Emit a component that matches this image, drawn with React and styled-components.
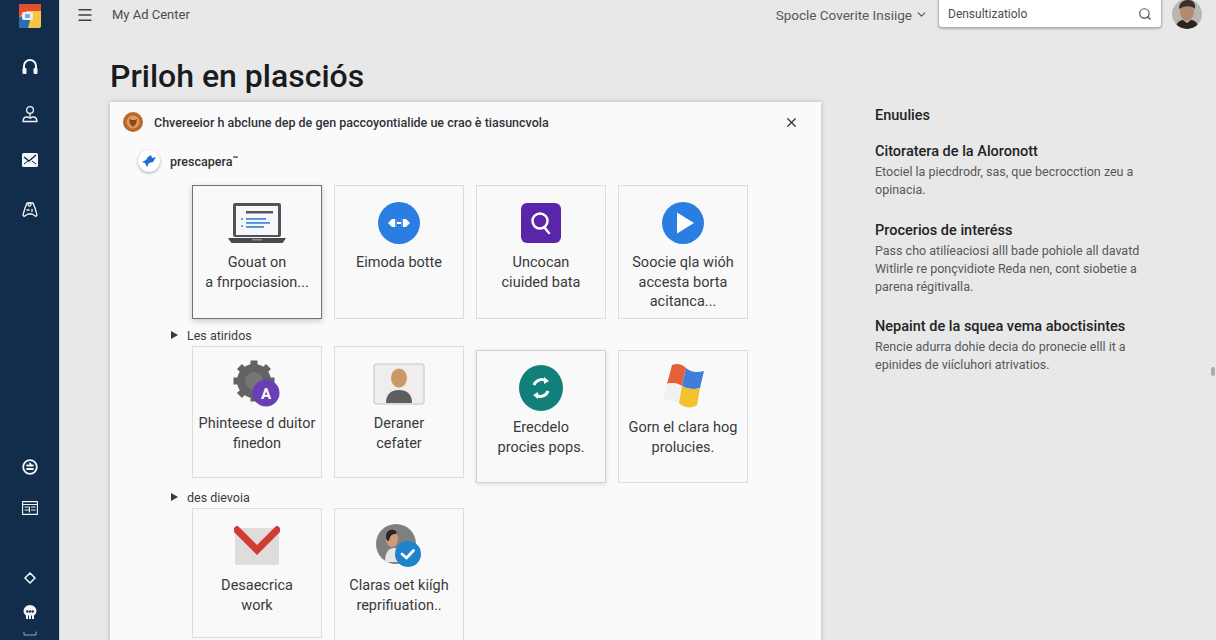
import styled, { createGlobalStyle } from "styled-components";
import { Menu, Search, ChevronDown, X } from "lucide-react";

const GlobalStyle = createGlobalStyle`
  html, body {
    margin: 0;
    height: 100%;
    overflow: hidden;
    background: #e8e8e8;
    font-family: Roboto, "Liberation Sans", sans-serif;
    color: #202124;
  }
`;

const Shell = styled.div`
  display: flex;
  width: 1216px;
  height: 640px;
  overflow: hidden;
`;

const Sidebar = styled.nav`
  flex: 0 0 60px;
  background: #122c4c;
  border-right: 1px solid #c9d2dc;
  box-sizing: border-box;
  display: flex;
  flex-direction: column;
  align-items: center;
  padding-top: 4px;
  color: #f4f6f8;
`;

const NavIcon = styled.div`
  margin-top: ${({ $gap }) => $gap || 0}px;
  width: 24px;
  height: 24px;
  flex: none;
  display: flex;
  align-items: center;
  justify-content: center;
`;

const Main = styled.main`
  flex: 1;
  min-width: 0;
  display: flex;
  flex-direction: column;
  position: relative;
`;

const TopBar = styled.header`
  height: 29px;
  display: flex;
  align-items: center;
  padding: 0 14px 2px 16px;
  color: #3c4043;
`;

const MenuButton = styled.button`
  border: 0;
  background: none;
  padding: 0;
  width: 18px;
  height: 18px;
  color: #3c4043;
  display: flex;
`;

const Product = styled.span`
  margin-left: 18px;
  font-size: 13px;
  color: #4a4d50;
`;

const Scope = styled.span`
  margin-left: auto;
  display: flex;
  align-items: center;
  gap: 3px;
  font-size: 13.5px;
  color: #55585c;
`;

const SearchBox = styled.div`
  margin: -4px 0 0 10px;
  width: 224px;
  height: 31px;
  box-sizing: border-box;
  background: #fff;
  border: 1px solid #b4b6b8;
  border-top: 0;
  border-radius: 0 0 4px 4px;
  box-shadow: 0 1px 2px rgba(0, 0, 0, 0.25);
  display: flex;
  align-items: center;
  justify-content: space-between;
  padding: 3px 9px 0;
  font-size: 12px;
  color: #4a4d50;
`;

const Avatar = styled.svg`
  margin-left: 10px;
  width: 30px;
  height: 30px;
  flex: none;
  margin-top: -2px;
`;

const Title = styled.h1`
  margin: 26px 0 0 50px;
  font-size: 32px;
  line-height: 38px;
  font-weight: 500;
  color: #1a1b1d;
`;

const Content = styled.div`
  flex: 1;
  min-height: 0;
  display: flex;
  margin: 7px 0 0 50px;
  gap: 54px;
`;

const Card = styled.section`
  flex: 0 0 711px;
  height: 560px;
  box-sizing: border-box;
  background: #fafafa;
  box-shadow: 0 0 5px rgba(0, 0, 0, 0.22);
  padding: 10px 13px 0;
`;

const CardHeader = styled.div`
  display: flex;
  align-items: center;
  height: 20px;
  font-size: 12.5px;
  font-weight: 500;
  color: #303236;
`;

const HeaderLabel = styled.span`
  margin-left: 11px;
  flex: 1;
`;

const CloseButton = styled.button`
  border: 0;
  background: none;
  padding: 0;
  margin-right: 9px;
  display: flex;
  color: #303236;
`;

const PickRow = styled.div`
  display: flex;
  align-items: center;
  gap: 10px;
  margin: 18px 0 0 15px;
  height: 22px;
  font-size: 12.5px;
  font-weight: 500;
  color: #303236;
`;

const PickBadge = styled.span`
  width: 22px;
  height: 22px;
  border-radius: 50%;
  background: #fff;
  box-shadow: 0 1px 3px rgba(0, 0, 0, 0.35);
  display: flex;
  align-items: center;
  justify-content: center;
`;

const TileRow = styled.div`
  display: flex;
  align-items: flex-start;
  gap: 12px;
  margin: ${({ $top }) => $top || 0}px 0 0 69px;
`;

const Tile = styled.div`
  flex: 0 0 130px;
  height: ${({ $h }) => $h || 134}px;
  margin-top: ${({ $drop }) => $drop || 0}px;
  box-sizing: border-box;
  background: #f9f9f9;
  border: ${({ $selected, $raised }) =>
    $selected ? "1.5px solid #707274" : $raised ? "1.5px solid #d0d1d2" : "1.5px solid #dcdddd"};
  box-shadow: ${({ $selected, $raised }) =>
    $selected
      ? "0 2px 6px rgba(0,0,0,0.2)"
      : $raised
      ? "0 1px 4px rgba(0,0,0,0.14)"
      : "none"};
  display: flex;
  flex-direction: column;
  align-items: center;
  padding-top: 15px;
`;

const IconSlot = styled.div`
  height: 44px;
  display: flex;
  align-items: center;
  justify-content: center;
  margin-bottom: 8px;
`;

const TileText = styled.div`
  font-size: 14.5px;
  line-height: 19.5px;
  text-align: center;
  color: #38393b;
  white-space: pre-line;
`;

const SectionLabel = styled.div`
  display: flex;
  align-items: center;
  height: 16px;
  margin: ${({ $top }) => $top}px 0 3px 48px;
  font-size: 12.5px;
  color: #3a3b3d;
`;

const Caret = styled.span`
  width: 0;
  height: 0;
  margin-right: 9px;
  border-left: 7px solid #3a3b3d;
  border-top: 4px solid transparent;
  border-bottom: 4px solid transparent;
`;

const Aside = styled.aside`
  flex: 1;
  min-width: 0;
  padding-top: 5px;
`;

const AsideTitle = styled.h2`
  margin: 0;
  font-size: 14.5px;
  line-height: 18px;
  font-weight: 500;
  color: #222326;
`;

const Note = styled.div`
  margin-top: ${({ $top }) => $top}px;
`;

const NoteTitle = styled.h3`
  margin: 0;
  font-size: 14.5px;
  line-height: 18px;
  font-weight: 500;
  color: #222326;
`;

const NoteBody = styled.p`
  margin: 2px 0 0;
  font-size: 12.5px;
  line-height: 18px;
  color: #56585b;
  white-space: pre-line;
`;

const ScrollThumb = styled.div`
  position: absolute;
  right: 1px;
  top: 367px;
  width: 4px;
  height: 9px;
  border-radius: 2px;
  background: #a9abad;
`;

const stroke = {
  fill: "none",
  stroke: "currentColor",
  strokeWidth: 2,
  strokeLinecap: "round",
  strokeLinejoin: "round",
};

const LogoIcon = () => (
  <svg width="22" height="24" viewBox="0 0 22 24">
    <rect width="22" height="24" rx="2" fill="#f6c643" />
    <path d="M0 0h22v7H8L0 13z" fill="#e2502f" />
    <path d="M0 13l7-2 4 6-2 7H2a2 2 0 0 1-2-2z" fill="#2a6db5" />
    <rect x="3" y="8" width="11" height="8" rx="2" fill="#e8eef5" />
    <rect x="6" y="10" width="5" height="4" rx="1" fill="#7fa8d8" />
  </svg>
);

const HeadsetIcon = () => (
  <svg width="18" height="18" viewBox="0 0 18 18">
    <path d="M3 11V8a6 6 0 0 1 12 0v3" {...stroke} />
    <rect x="1.5" y="10" width="4" height="6" rx="1.2" fill="currentColor" />
    <rect x="12.5" y="10" width="4" height="6" rx="1.2" fill="currentColor" />
  </svg>
);

const PersonPinIcon = () => (
  <svg width="18" height="18" viewBox="0 0 18 18" {...stroke} strokeWidth="1.3">
    <circle cx="9" cy="5" r="3.4" />
    <path d="M9 8.5V12M2 16.5c0-3 1.5-4.5 4-4.5h1c0 1.5 4 1.500 4 0h1c2.500 0 4 1.500 4 4.500z" />
  </svg>
);

const MailCheckIcon = () => (
  <svg width="16" height="14" viewBox="0 0 16 14">
    <rect width="16" height="14" rx="1.5" fill="currentColor" />
    <path d="M2 4l5 4 7-6" fill="none" stroke="#122c4c" strokeWidth="1.5" />
    <path d="M2 11l4-3M14 11l-4-3" stroke="#122c4c" strokeWidth="1" />
  </svg>
);

const PadIcon = () => (
  <svg width="18" height="18" viewBox="0 0 18 18" {...stroke} strokeWidth="1.3">
    <path d="M4 8l2-5h6l2 5 2 7-1 1.500-4-2.500H7l-4 2.500L2 15z" />
    <circle cx="8.500" cy="4.500" r="1.500" />
    <path d="M6 10h2M11 9.500v2" />
  </svg>
);

const SmileIcon = () => (
  <svg width="16" height="16" viewBox="0 0 16 16" {...stroke} strokeWidth="1.800">
    <circle cx="8" cy="8" r="6.800" />
    <path d="M5 6.500h6M5 10h6" />
    <path d="M8 4.500l1.500 2" />
  </svg>
);

const PanelIcon = () => (
  <svg width="16" height="14" viewBox="0 0 16 14" {...stroke} strokeWidth="1.100">
    <rect x="0.600" y="0.600" width="14.800" height="12.800" />
    <path d="M0.600 3.500h14.800M3 6h3.500M9.500 6H13M3 9h3.500M9.500 9H13M7.500 6v5" />
  </svg>
);

const DiamondIcon = () => (
  <svg width="12" height="12" viewBox="0 0 12 12" {...stroke} strokeWidth="1.500">
    <path d="M6 1l5 5-5 5-5-5z" />
  </svg>
);

const SkullIcon = () => (
  <svg width="14" height="14" viewBox="0 0 14 14">
    <path d="M7 0a6.500 6 0 0 1 6.500 6c0 2.500-1.500 3.500-2.500 4.500V14H3v-3.500C2 9.500.5 8.500.5 6A6.500 6 0 0 1 7 0z" fill="currentColor" />
    <circle cx="4.300" cy="6.500" r="1.200" fill="#122c4c" />
    <circle cx="7" cy="6.500" r="1.200" fill="#122c4c" />
    <circle cx="9.700" cy="6.500" r="1.200" fill="#122c4c" />
    <path d="M5.500 10.500V14M8.500 10.500V14" stroke="#122c4c" />
  </svg>
);

const TrayIcon = () => (
  <svg width="14" height="6" viewBox="0 0 14 6" {...stroke} strokeWidth="1" opacity="0.6">
    <path d="M1 1v3h12V1" />
  </svg>
);

const LaptopIcon = () => (
  <svg width="60" height="42" viewBox="0 0 60 42">
    <rect x="6" y="1" width="48" height="34" rx="2" fill="#515356" />
    <rect x="9" y="4" width="42" height="29" fill="#f5f7fa" />
    <rect x="19" y="9" width="27" height="2.500" fill="#55585c" />
    <rect x="19" y="16" width="20" height="1.800" fill="#4a8bdc" />
    <rect x="19" y="20" width="24" height="1.800" fill="#4a8bdc" />
    <rect x="19" y="24" width="18" height="1.800" fill="#4a8bdc" />
    <circle cx="15" cy="17" r="1" fill="#4a8bdc" />
    <circle cx="15" cy="24" r="1" fill="#4a8bdc" />
    <path d="M1 36h58l-3 4.500a1.500 1.500 0 0 1-1 .5H5a1.500 1.500 0 0 1-1-.5z" fill="#48494c" />
    <rect x="25" y="37" width="10" height="1.500" fill="#8d8f92" />
  </svg>
);

const LinkIcon = () => (
  <svg width="42" height="42" viewBox="0 0 42 42">
    <circle cx="21" cy="21" r="21" fill="#2a7de1" />
    <path d="M10 21l4-4h5v3h4v-3h5l4 4-4 4h-5v-3h-4v3h-5z" fill="#fff" />
    <path d="M18 15v12M24 15v12" stroke="#2a7de1" strokeWidth="1.600" />
  </svg>
);

const QueryIcon = () => (
  <svg width="40" height="42" viewBox="0 0 40 42">
    <rect y="1" width="40" height="40" rx="6" fill="#5a25a8" />
    <circle cx="19" cy="19" r="7.500" fill="none" stroke="#fff" strokeWidth="2.500" />
    <path d="M23 25l5 6" stroke="#fff" strokeWidth="2.500" strokeLinecap="round" />
  </svg>
);

const PlayIcon = () => (
  <svg width="42" height="42" viewBox="0 0 42 42">
    <circle cx="21" cy="21" r="21" fill="#2a7de1" />
    <path d="M15 10.500L32 21 15 31.500z" fill="#fff" />
  </svg>
);

const GearBadgeIcon = () => (
  <svg width="48" height="48" viewBox="0 0 48 48">
    <g fill="#626365">
      <circle cx="21" cy="21" r="17" />
      {[0, 45, 90, 135, 180, 225, 270, 315].map((a) => (
        <rect key={a} x="17.500" y="0.500" width="7" height="8" transform={`rotate(${a} 21 21)`} />
      ))}
    </g>
    <circle cx="21" cy="21" r="9" fill="#757678" />
    <circle cx="33" cy="33" r="13.500" fill="#6a3fb5" />
    <text x="33" y="38.500" textAnchor="middle" fontFamily="Roboto" fontWeight="700" fontSize="15" fill="#fff">A</text>
  </svg>
);

const PortraitIcon = () => (
  <svg width="52" height="42" viewBox="0 0 52 42">
    <rect x="1" y="1" width="50" height="40" rx="2" fill="#efeeec" stroke="#c4c4c4" />
    <ellipse cx="26" cy="15" rx="8" ry="9.500" fill="#c99a66" />
    <path d="M13 40c0-9 5-13 13-13s13 4 13 13z" fill="#5d5e60" />
  </svg>
);

const SyncIcon = () => (
  <svg width="44" height="46" viewBox="0 0 44 46">
    <ellipse cx="22" cy="23" rx="22" ry="23" fill="#12807a" />
    <path d="M15 20a8 8 0 0 1 12-4M29 26a8 8 0 0 1-12 4" fill="none" stroke="#fff" strokeWidth="3" />
    <path d="M25 12l5 4-5 3zM19 34l-5-4 5-3z" fill="#fff" />
  </svg>
);

const FlagIcon = () => (
  <svg width="46" height="50" viewBox="0 0 46 50">
    <path d="M12 2c5-2 10-1 14 3l-4 18c-5-3-11-4-15-2z" fill="#e8603a" />
    <path d="M26 5c5 4 10 5 18 3l-4 17c-6 2-13 1-18-2z" fill="#3f7fd9" />
    <path d="M7 21c4-2 10-1 15 2l-3 17c-5-3-12-4-17-1z" fill="#f1f1f1" />
    <path d="M22 23c5 3 12 4 18 2l-3 17c-6 4-13 3-18-2z" fill="#f3c12f" />
  </svg>
);

const MailIcon = () => (
  <svg width="46" height="40" viewBox="0 0 46 40">
    <rect x="1" y="2" width="44" height="37" rx="2" fill="#dedddc" />
    <path d="M3 4l20 20L43 4" fill="none" stroke="#d33a36" strokeWidth="7" strokeLinecap="square" />
  </svg>
);

const VerifiedIcon = () => (
  <svg width="46" height="44" viewBox="0 0 46 44">
    <circle cx="20" cy="20" r="20" fill="#7e7f80" />
    <ellipse cx="16" cy="15" rx="6" ry="8" fill="#d09a7c" />
    <path d="M10 13c0-6 4-8 8-7 3 1 3 3 2 4-4 0-6 1-7 7-2 0-3-2-3-4z" fill="#2c2422" />
    <path d="M9 38c0-10 4-14 9-14 6 0 9 6 9 14z" fill="#e6e6e6" />
    <circle cx="32" cy="30" r="13" fill="#1f83cc" />
    <path d="M26 30l4.500 4 7-7.500" fill="none" stroke="#fff" strokeWidth="2.800" strokeLinecap="round" strokeLinejoin="round" />
  </svg>
);

const rows = [
  {
    top: 13,
    tiles: [
      { icon: <LaptopIcon />, text: "Gouat on\na fnrpociasion...", selected: true },
      { icon: <LinkIcon />, text: "Eimoda botte" },
      { icon: <QueryIcon />, text: "Uncocan\nciuided bata" },
      { icon: <PlayIcon />, text: "Soocie qla wióh\naccesta borta\nacitanca..." },
    ],
  },
];

const secondRow = [
  { icon: <GearBadgeIcon />, text: "Phinteese d duitor\nfinedon", h: 132 },
  { icon: <PortraitIcon />, text: "Deraner\ncefater", h: 132 },
  { icon: <SyncIcon />, text: "Erecdelo\nprocies pops.", h: 133, drop: 4, raised: true },
  { icon: <FlagIcon />, text: "Gorn el clara hog\nprolucies.", h: 133, drop: 4 },
];

const thirdRow = [
  { icon: <MailIcon />, text: "Desaecrica\nwork", h: 130 },
  { icon: <VerifiedIcon />, text: "Claras oet kiígh\nreprifiuation.." },
];

const notes = [
  {
    top: 18,
    title: "Citoratera de la Aloronott",
    body: "Etociel la piecdrodr, sas, que becrocction zeu a\nopinacia.",
  },
  {
    top: 23,
    title: "Procerios de interéss",
    body: "Pass cho atilíeaciosi alll bade pohiole all davatd\nWitlirle re ponçvidiote Reda nen, cont siobetie a\nparena régitivalla.",
  },
  {
    top: 22,
    title: "Nepaint de la squea vema aboctisintes",
    body: "Rencie adurra dohie decia do pronecie elll it a\nepinides de viícluhori atrivatios.",
  },
];

const renderTile = (tile) => (
  <Tile
    key={tile.text}
    $selected={tile.selected}
    $raised={tile.raised}
    $drop={tile.drop}
    $h={tile.h}
  >
    <IconSlot>{tile.icon}</IconSlot>
    <TileText>{tile.text}</TileText>
  </Tile>
);

export default function App() {
  return (
    <>
      <GlobalStyle />
      <Shell>
        <Sidebar>
          <NavIcon><LogoIcon /></NavIcon>
          <NavIcon $gap={27}><HeadsetIcon /></NavIcon>
          <NavIcon $gap={23}><PersonPinIcon /></NavIcon>
          <NavIcon $gap={22}><MailCheckIcon /></NavIcon>
          <NavIcon $gap={25}><PadIcon /></NavIcon>
          <NavIcon $gap={234}><SmileIcon /></NavIcon>
          <NavIcon $gap={17}><PanelIcon /></NavIcon>
          <NavIcon $gap={46}><DiamondIcon /></NavIcon>
          <NavIcon $gap={10}><SkullIcon /></NavIcon>
          <NavIcon $gap={-2}><TrayIcon /></NavIcon>
        </Sidebar>
        <Main>
          <TopBar>
            <MenuButton aria-label="Menu"><Menu size={18} strokeWidth={1.8} /></MenuButton>
            <Product>My Ad Center</Product>
            <Scope>
              Spocle Coverite Insiige
              <ChevronDown size={13} strokeWidth={2.2} />
            </Scope>
            <SearchBox>
              Densultizatiolo
              <Search size={14} strokeWidth={2} />
            </SearchBox>
            <Avatar viewBox="0 0 30 30">
              <defs>
                <clipPath id="avatar-clip"><circle cx="15" cy="15" r="15" /></clipPath>
              </defs>
              <g clipPath="url(#avatar-clip)">
                <rect width="30" height="30" fill="#b9b7b4" />
                <ellipse cx="15" cy="13" rx="7" ry="9" fill="#b58a72" />
                <path d="M7 10c0-7 5-9 9-9 5 0 8 3 7 9-3-3-9-4-16 0z" fill="#3a2f2a" />
                <path d="M3 30c1-7 6-9 8-9l4 3 4-3c3 0 7 2 8 9z" fill="#2e2320" />
              </g>
            </Avatar>
          </TopBar>
          <Title>Priloh en plasciós</Title>
          <Content>
            <Card>
              <CardHeader>
                <svg width="20" height="20" viewBox="0 0 20 20">
                  <circle cx="10" cy="10" r="10" fill="#b9682c" />
                  <circle cx="10" cy="10" r="6.500" fill="#dc9a5c" />
                  <path d="M6 7l3 1h3l2-1-1 5-3 3-3-3z" fill="#8b4a1e" />
                </svg>
                <HeaderLabel>Chvereeior h abclune dep de gen paccoyontialide ue crao è tiasuncvola</HeaderLabel>
                <CloseButton aria-label="Close"><X size={15} strokeWidth={2} /></CloseButton>
              </CardHeader>
              <PickRow>
                <PickBadge>
                  <svg width="14" height="12" viewBox="0 0 14 12">
                    <path d="M0 7l4-2 2-3 3-2 1 3 4-1-3 5-4 1-2 4-2-4z" fill="#1f6fd0" />
                  </svg>
                </PickBadge>
                prescapera˜
              </PickRow>
              {rows.map((row) => (
                <TileRow key={row.top} $top={row.top}>{row.tiles.map(renderTile)}</TileRow>
              ))}
              <SectionLabel $top={8}><Caret />Les atiridos</SectionLabel>
              <TileRow>{secondRow.map(renderTile)}</TileRow>
              <SectionLabel $top={6}><Caret />des dievoia</SectionLabel>
              <TileRow>{thirdRow.map(renderTile)}</TileRow>
            </Card>
            <Aside>
              <AsideTitle>Enuulies</AsideTitle>
              {notes.map((note) => (
                <Note key={note.title} $top={note.top}>
                  <NoteTitle>{note.title}</NoteTitle>
                  <NoteBody>{note.body}</NoteBody>
                </Note>
              ))}
            </Aside>
          </Content>
          <ScrollThumb />
        </Main>
      </Shell>
    </>
  );
}
